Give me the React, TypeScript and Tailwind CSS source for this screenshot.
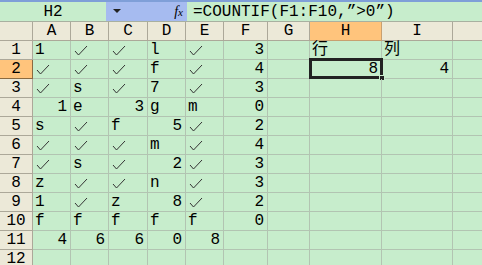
import React from "react";

const W = ["w-[33px]", "w-[38px]", "w-[38px]", "w-[39px]", "w-[38px]", "w-[38px]", "w-[44px]", "w-[42px]", "w-[72px]", "w-[71px]", "w-[40px]"];
const COLS = ["A", "B", "C", "D", "E", "F", "G", "H", "I", ""];

type C = string | null;
const V = "V";
// each cell: text; prefix "r:" for right aligned
const data: C[][] = [
  ["1", V, V, "l", V, "r:3", null, "行", "列"],
  [V, V, V, "f", V, "r:4", null, "r:8", "r:4"],
  [V, "s", V, "7", V, "r:3"],
  ["r:1", "e", "r:3", "g", "m", "r:0"],
  ["s", V, "f", "r:5", V, "r:2"],
  [V, V, V, "m", V, "r:4"],
  [V, "s", V, "r:2", V, "r:3"],
  ["z", V, V, "n", V, "r:3"],
  ["1", V, "z", "r:8", V, "r:2"],
  ["f", "f", "f", "f", "f", "r:0"],
  ["r:4", "r:6", "r:6", "r:0", "r:8"],
  [],
];

function Check() {
  return (
    <svg width="14" height="11" viewBox="0 0 14 11" className="ml-[3px]">
      <polyline points="1,6 4.5,10 13,1" fill="none" stroke="#333" strokeWidth="1" />
    </svg>
  );
}

function Cell({ v, w }: { v: C | undefined; w: string }) {
  let content: React.ReactNode = null;
  let right = false;
  if (v === V) content = <Check />;
  else if (v) {
    if (v.startsWith("r:")) {
      right = true;
      content = <span className="pr-[3px]">{v.slice(2)}</span>;
    } else content = <span className="pl-[2px]">{v}</span>;
  }
  return (
    <div
      className={`${w} shrink-0 h-[19px] border-r border-b border-[#b2c4b2] flex items-center overflow-visible whitespace-nowrap ${right ? "justify-end" : "justify-start"}`}
    >
      {content}
    </div>
  );
}

export default function App() {
  return (
    <div
      className="w-[482px] h-[265px] overflow-hidden bg-[#c7edcc] text-black text-[16px] leading-none"
      style={{ fontFamily: '"Liberation Mono", "Noto Sans CJK SC", monospace' }}
    >
      {/* formula bar */}
      <div className="h-[2px] bg-[#7f9fd8]" />
      <div className="h-[20px] flex border-b border-[#a8b0a0]">
        <div className="w-[106px] shrink-0 flex items-center justify-center bg-[#c7edcc]">H2</div>
        <div className="w-[81px] shrink-0 bg-[#a6bbf0] flex items-center justify-between pl-[7px] pr-[4px]">
          <svg width="8" height="5" viewBox="0 0 8 5">
            <polygon points="0,0 8,0 4,4" fill="#222" />
          </svg>
          <span className="italic text-[14px]" style={{ fontFamily: '"Liberation Serif", serif' }}>
            f<span className="text-[11px]">x</span>
          </span>
        </div>
        <div className="flex-1 flex items-center pl-[6px] bg-[#c7edcc]">=COUNTIF(F1:F10,”&gt;0”)</div>
      </div>
      {/* header */}
      <div className="flex h-[19px]">
        {W.map((w, i) => (
          <div
            key={i}
            className={`${w} shrink-0 h-[19px] border-r border-b ${i === 8 ? "bg-[#ffc47c] border-[#c8a070]" : "bg-[#ece9d8] border-[#aca899]"} flex items-center justify-center`}
          >
            {i === 0 ? "" : COLS[i - 1]}
          </div>
        ))}
      </div>
      {data.map((row, r) => (
        <div key={r} className="flex h-[19px] relative">
          <div
            className={`${W[0]} shrink-0 h-[19px] border-r border-b flex items-center justify-center ${r === 1 ? "bg-[#ffc47c] border-[#8a6a40]" : "bg-[#ece9d8] border-[#aca899]"}`}
          >
            {r + 1}
          </div>
          {W.slice(1).map((w, c) => (
            <Cell key={c} v={row[c]} w={w} />
          ))}
          {r === 1 && (
            <div className="absolute left-[309px] top-[-2px] w-[74px] h-[21px] border-[3px] border-[#222] pointer-events-none">
              <div className="absolute right-[-5px] bottom-[-5px] w-[6px] h-[6px] bg-[#222] border border-[#c7edcc]" />
            </div>
          )}
        </div>
      ))}
    </div>
  );
}
